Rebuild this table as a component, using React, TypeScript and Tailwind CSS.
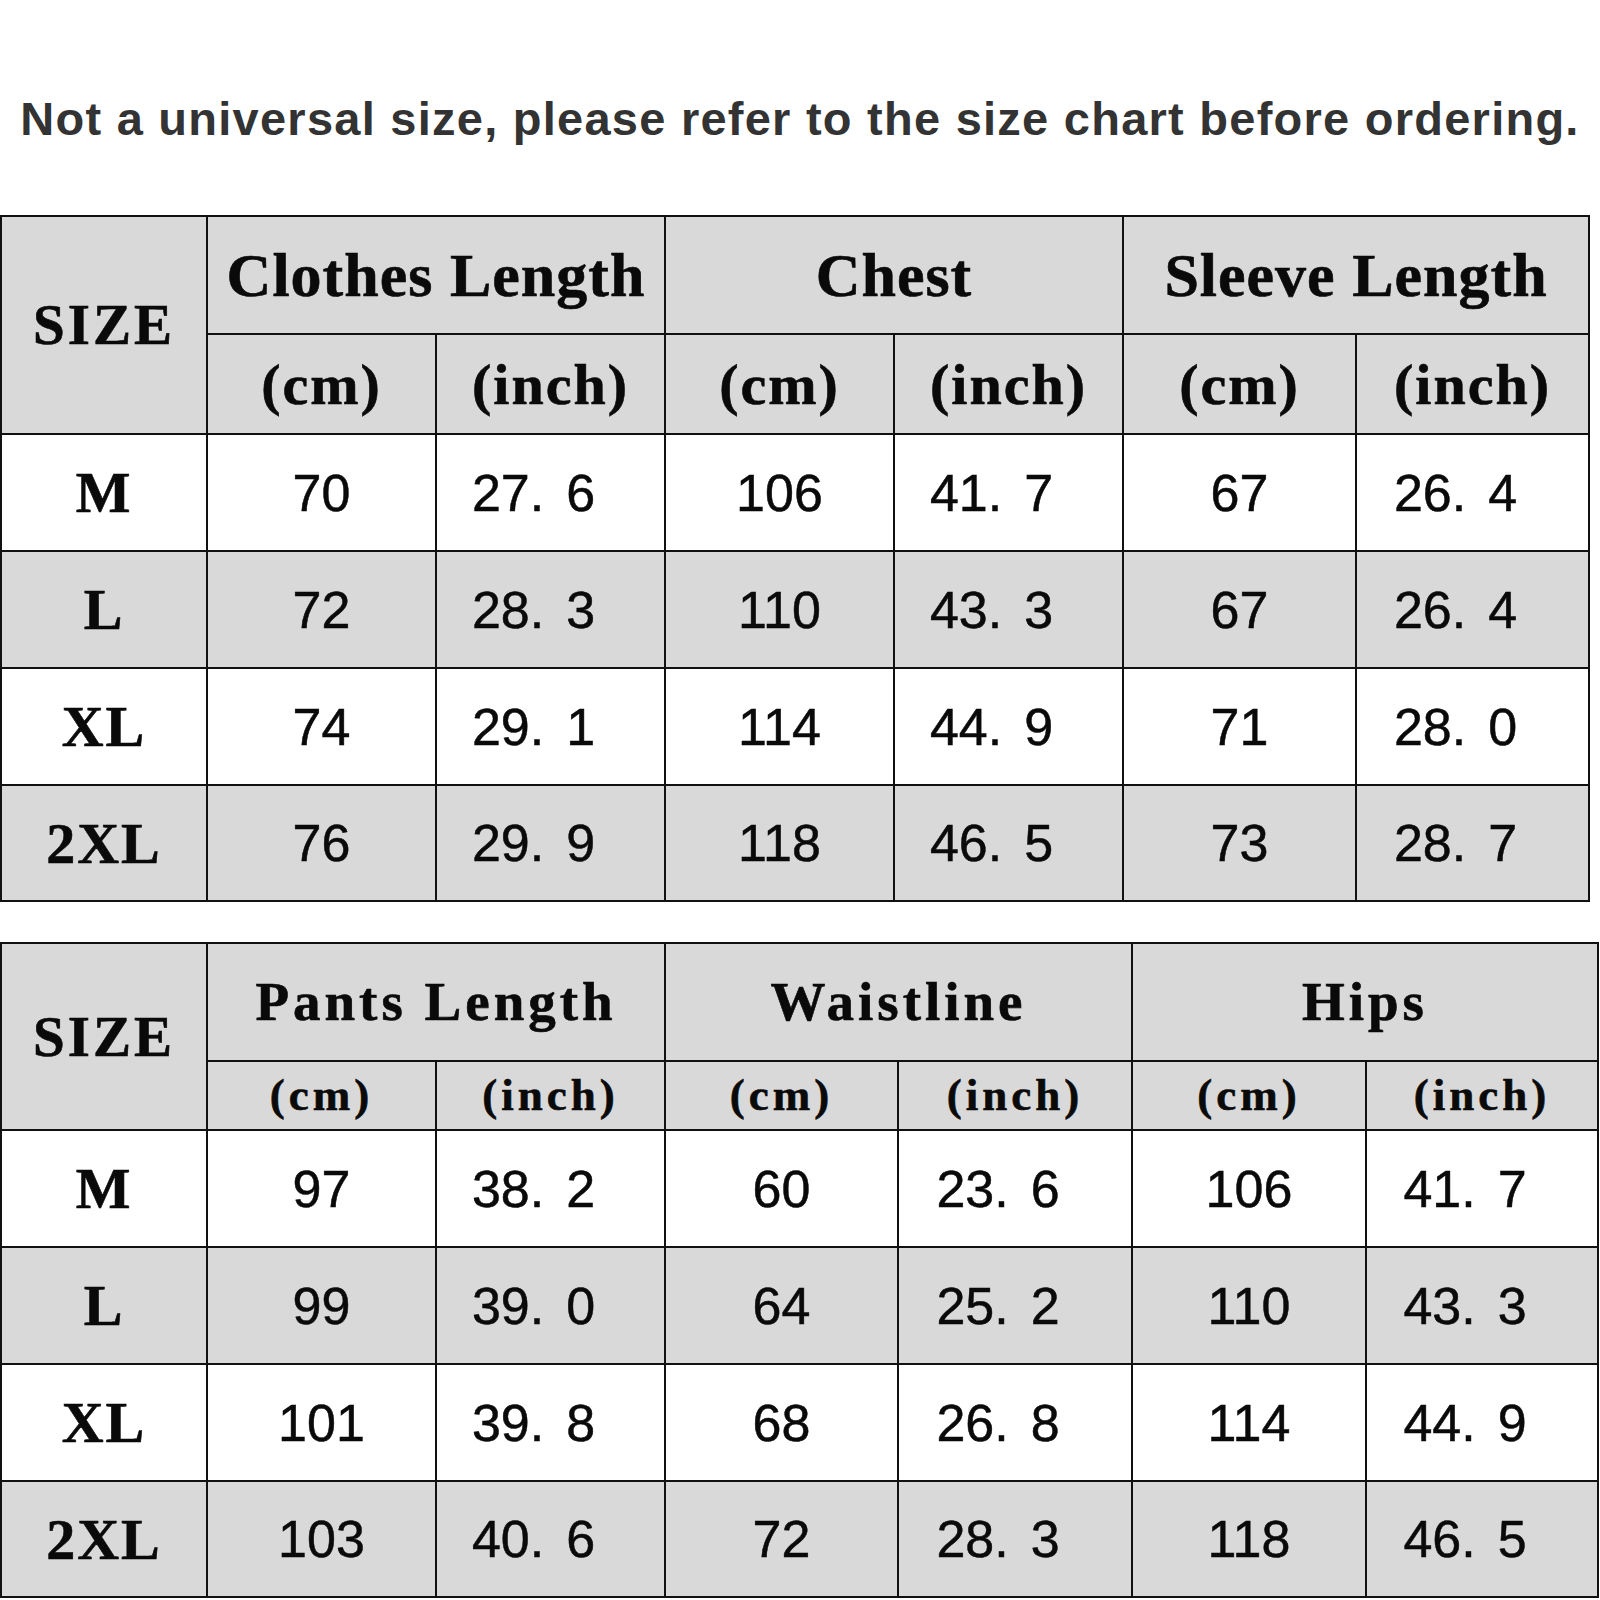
import React from "react";

type Row = { size: string; values: string[] };

const topRows: Row[] = [
  { size: "M", values: ["70", "27.6", "106", "41.7", "67", "26.4"] },
  { size: "L", values: ["72", "28.3", "110", "43.3", "67", "26.4"] },
  { size: "XL", values: ["74", "29.1", "114", "44.9", "71", "28.0"] },
  { size: "2XL", values: ["76", "29.9", "118", "46.5", "73", "28.7"] },
];

const bottomRows: Row[] = [
  { size: "M", values: ["97", "38.2", "60", "23.6", "106", "41.7"] },
  { size: "L", values: ["99", "39.0", "64", "25.2", "110", "43.3"] },
  { size: "XL", values: ["101", "39.8", "68", "26.8", "114", "44.9"] },
  { size: "2XL", values: ["103", "40.6", "72", "28.3", "118", "46.5"] },
];

const serif =
  "font-['Liberation_Serif',serif] font-bold text-[#0a0a0a] [-webkit-text-stroke:0.6px_#0a0a0a]";
const sans =
  "font-['Liberation_Sans',Arial,sans-serif] text-[#0a0a0a] [-webkit-text-stroke:0.5px_#0a0a0a]";

// decimal values: the dot is drawn wide, like in the original chart
function Value({ text }: { text: string }) {
  const dot = text.indexOf(".");
  if (dot < 0) return <span>{text}</span>;
  return (
    <span>
      {text.slice(0, dot)}
      <span className="mr-[22px]">.</span>
      {text.slice(dot + 1)}
    </span>
  );
}

function BodyRows({ rows }: { rows: Row[] }) {
  return (
    <>
      {rows.map((row, i) => {
        const bg = i % 2 === 0 ? "bg-white" : "bg-[#d9d9d9]";
        return (
          <React.Fragment key={row.size}>
            <div className={`${bg} ${serif} flex items-center justify-center text-[58px] tracking-[2px]`}>
              {row.size}
            </div>
            {row.values.map((v, j) => (
              <div
                key={j}
                className={`${bg} ${sans} flex items-center justify-center text-[52px] ${
                  v.includes(".") ? "pr-[34px]" : ""
                }`}
              >
                <Value text={v} />
              </div>
            ))}
          </React.Fragment>
        );
      })}
    </>
  );
}

function SizeTable({
  titles,
  rows,
  cols,
  heightRows,
  headSize,
  unitSize,
}: {
  titles: string[];
  rows: Row[];
  cols: string;
  heightRows: string;
  headSize: string;
  unitSize: string;
}) {
  return (
    <div className={`grid w-fit gap-[2px] bg-[#111] p-[2px] ${cols} ${heightRows}`}>
      <div
        className={`row-span-2 flex items-center justify-center bg-[#d9d9d9] ${serif} text-[57px] tracking-[3px]`}
      >
        SIZE
      </div>
      {titles.map((t) => (
        <div key={t} className={`col-span-2 flex items-center justify-center bg-[#d9d9d9] ${serif} ${headSize}`}>
          {t}
        </div>
      ))}
      {titles.map((t) => (
        <React.Fragment key={t + "-units"}>
          <div className={`flex items-center justify-center bg-[#d9d9d9] ${serif} ${unitSize}`}>(cm)</div>
          <div className={`flex items-center justify-center bg-[#d9d9d9] ${serif} ${unitSize}`}>(inch)</div>
        </React.Fragment>
      ))}
      <BodyRows rows={rows} />
    </div>
  );
}

export default function App() {
  return (
    <div className="h-[1600px] w-[1600px] bg-white">
      <div className="h-[215px] pt-[95px] text-center font-['Liberation_Sans',Arial,sans-serif] text-[47px] font-bold leading-[47px] tracking-[1.25px] text-[#333]">
        Not a universal size, please refer to the size chart before ordering.
      </div>
      <SizeTable
        titles={["Clothes Length", "Chest", "Sleeve Length"]}
        rows={topRows}
        cols="grid-cols-[204px_227px_227px_227px_227px_231px_231px]"
        heightRows="grid-rows-[116px_98px_115px_115px_115px_114px]"
        headSize="text-[62px] tracking-[1px]"
        unitSize="text-[58px] tracking-[2px]"
      />
      <div className="mt-[40px]">
        <SizeTable
          titles={["Pants Length", "Waistline", "Hips"]}
          rows={bottomRows}
          cols="grid-cols-[204px_227px_227px_231px_232px_232px_230px]"
          heightRows="grid-rows-[116px_67px_115px_115px_115px_114px]"
          headSize="text-[55px] tracking-[4px]"
          unitSize="text-[45px] tracking-[4px]"
        />
      </div>
    </div>
  );
}
